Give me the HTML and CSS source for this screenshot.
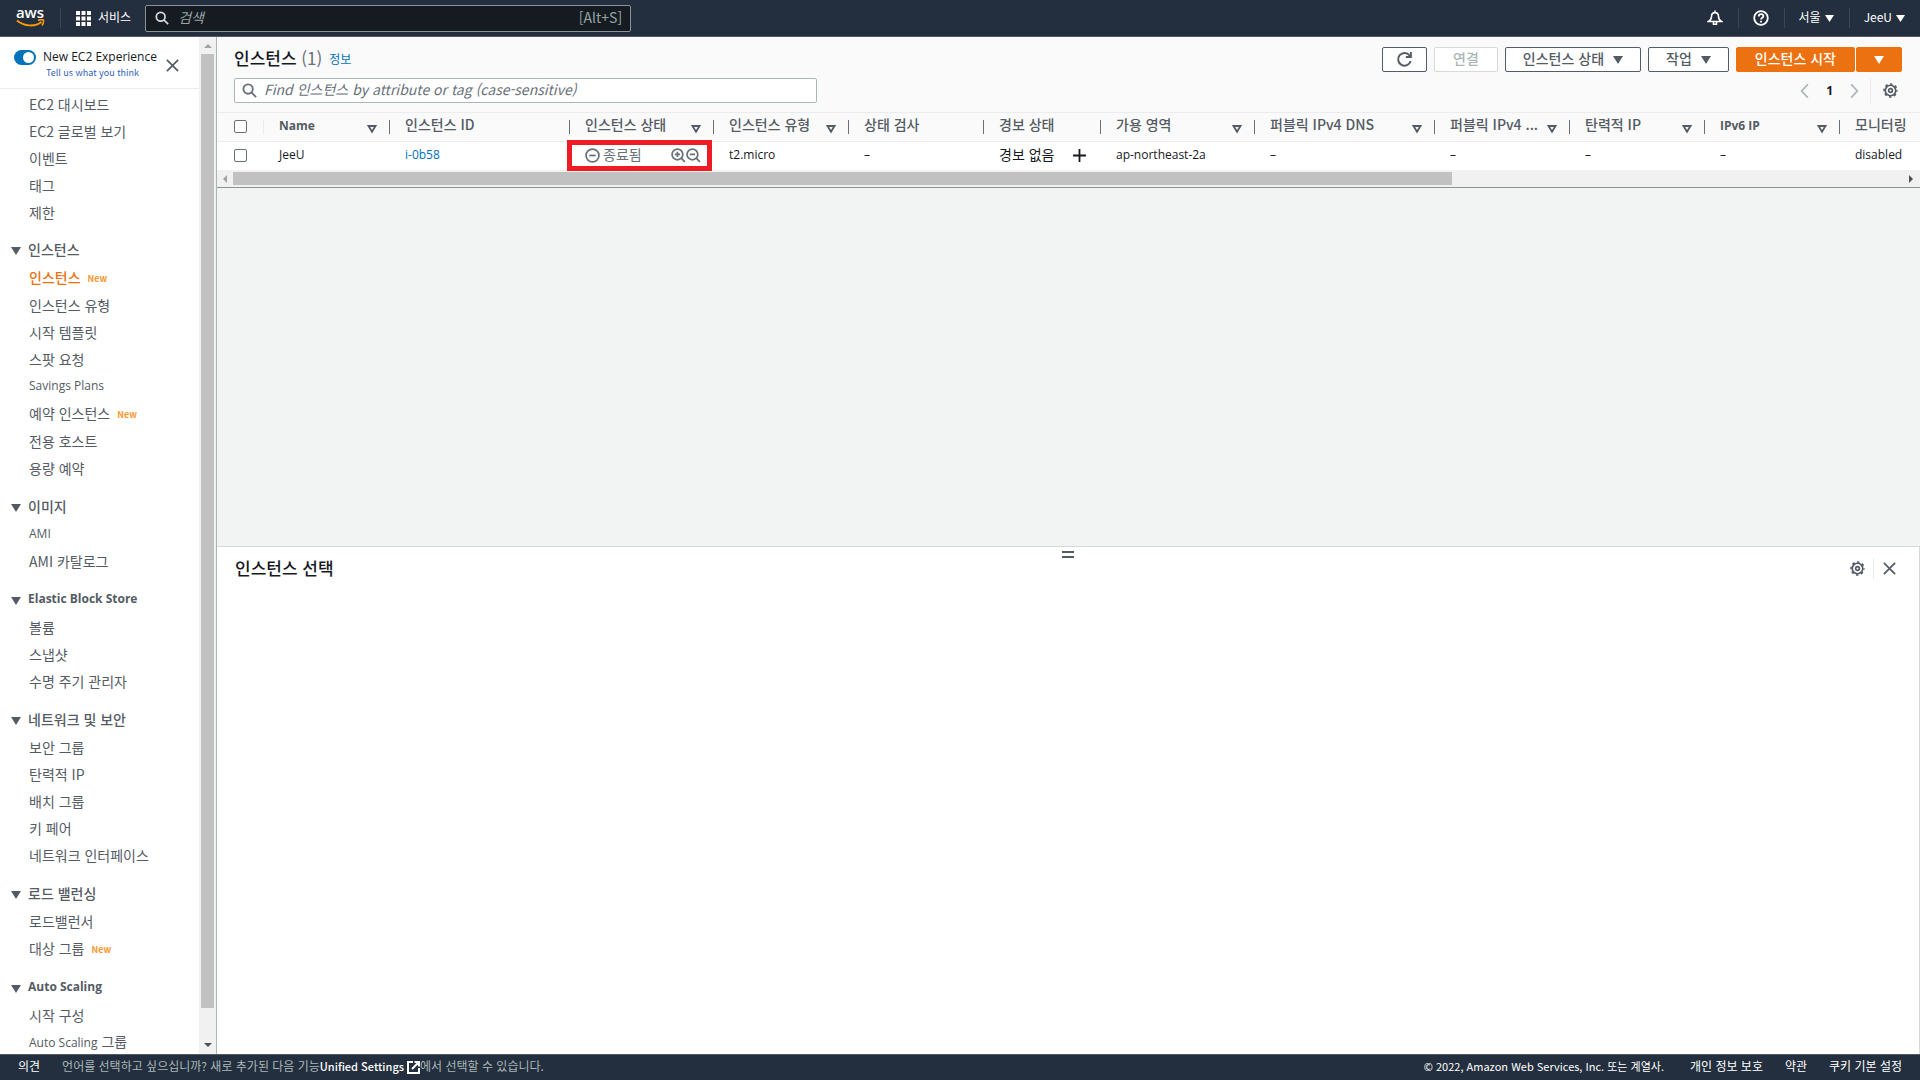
FILE: index.html
```html
<!DOCTYPE html>
<html lang="ko">
<head>
    <meta charset="UTF-8">
    <meta name="viewport" content="width=device-width, initial-scale=1.0">
    <title>인스턴스 | EC2 Management Console</title>
    <link rel="stylesheet" href="styles.css">
</head>
<body>
    <!-- shared icons -->
    <svg class="sprite" aria-hidden="true">
        <symbol id="icon-search" viewBox="0 0 16 16">
            <circle cx="6.5" cy="6.5" r="5" fill="none" stroke="currentColor" stroke-width="2"/>
            <path d="M10 10l5 5" fill="none" stroke="currentColor" stroke-width="2"/>
        </symbol>
        <symbol id="icon-gear" viewBox="0 0 16 16">
            <circle cx="8" cy="8" r="5.6" fill="none" stroke="currentColor" stroke-width="1.8"/>
            <circle cx="8" cy="8" r="6.9" fill="none" stroke="currentColor" stroke-width="1.6" stroke-dasharray="2.71 2.71" stroke-dashoffset="1.35"/>
            <circle cx="8" cy="8" r="2" fill="none" stroke="currentColor" stroke-width="1.8"/>
        </symbol>
        <symbol id="icon-close" viewBox="0 0 16 16">
            <path d="M2 2l12 12M14 2L2 14" fill="none" stroke="currentColor" stroke-width="1.8"/>
        </symbol>
        <symbol id="icon-caret" viewBox="0 0 10 10">
            <path d="M0 1h10L5 9z" fill="currentColor"/>
        </symbol>
        <symbol id="icon-sort" viewBox="0 0 10 10">
            <path d="M1.5 2h7L5 7.8z" fill="none" stroke="currentColor" stroke-width="1.8"/>
        </symbol>
    </svg>

    <header class="topbar">
        <a href="#" class="logo" aria-label="AWS">
            <span>aws</span>
            <svg width="29" height="9" viewBox="0 0 29 9">
                <path d="M1 1.5c7 6 18 6.5 24.5 1.5" fill="none" stroke="#ff9900" stroke-width="2"/>
                <path d="M22 1.5c2-1 4-1 5.5-.5.3 2-.3 4-1.5 5.5" fill="none" stroke="#ff9900" stroke-width="1.5"/>
            </svg>
        </a>
        <button class="services">
            <svg width="15" height="15" viewBox="0 0 15 15" fill="#fff">
                <path d="M0 0h4v4H0zM5.5 0h4v4h-4zM11 0h4v4h-4zM0 5.5h4v4H0zM5.5 5.5h4v4h-4zM11 5.5h4v4h-4zM0 11h4v4H0zM5.5 11h4v4h-4zM11 11h4v4h-4z"/>
            </svg>
            <span>서비스</span>
        </button>
        <label class="top-search">
            <svg width="14" height="14"><use href="#icon-search"/></svg>
            <input type="search" placeholder="검색" aria-label="검색">
            <span>[Alt+S]</span>
        </label>
        <nav class="top-links">
            <button aria-label="알림">
                <svg width="16" height="16" viewBox="0 0 16 16" fill="none" stroke="#fff" stroke-width="1.6">
                    <path d="M8 .5v2M1.5 11.5c2.5-1.5 3-3 3-5C4.5 4 6 2.6 8 2.6s3.5 1.4 3.5 3.9c0 2 .5 3.5 3 5z"/>
                    <path d="M6.5 12v2.2h3V12"/>
                </svg>
            </button>
            <button aria-label="도움말">
                <svg width="16" height="16" viewBox="0 0 16 16" fill="none" stroke="#fff" stroke-width="1.8">
                    <circle cx="8" cy="8" r="6.8"/>
                    <path d="M5.8 6.4c0-3 4.6-2.8 4.6-.2C10.4 7.8 8 7.6 8 9.6M8 10.8v1.7"/>
                </svg>
            </button>
            <button><span>서울</span> <svg width="9" height="9"><use href="#icon-caret"/></svg></button>
            <button><span>JeeU</span> <svg width="9" height="9"><use href="#icon-caret"/></svg></button>
        </nav>
    </header>

    <div class="layout">
        <aside class="sidebar">
            <div class="side-content">
                <div class="experience">
                    <input type="checkbox" id="new-exp" class="toggle" checked>
                    <div class="exp-text">
                        <label for="new-exp">New EC2 Experience</label>
                        <a href="#">Tell us what you think</a>
                    </div>
                    <button class="icon-btn" aria-label="닫기"><svg width="15" height="15"><use href="#icon-close"/></svg></button>
                </div>
                <nav class="side-nav">
                    <ul>
                        <li><a href="#">EC2 대시보드</a></li>
                        <li><a href="#">EC2 글로벌 보기</a></li>
                        <li><a href="#">이벤트</a></li>
                        <li><a href="#">태그</a></li>
                        <li><a href="#">제한</a></li>
                    </ul>
                    <h3><svg width="10" height="10"><use href="#icon-caret"/></svg><span>인스턴스</span></h3>
                    <ul>
                        <li class="has-badge"><a href="#" class="active">인스턴스</a><span class="badge">New</span></li>
                        <li><a href="#">인스턴스 유형</a></li>
                        <li><a href="#">시작 템플릿</a></li>
                        <li><a href="#">스팟 요청</a></li>
                        <li><a href="#" class="latin">Savings Plans</a></li>
                        <li class="has-badge"><a href="#">예약 인스턴스</a><span class="badge">New</span></li>
                        <li><a href="#">전용 호스트</a></li>
                        <li><a href="#">용량 예약</a></li>
                    </ul>
                    <h3><svg width="10" height="10"><use href="#icon-caret"/></svg><span>이미지</span></h3>
                    <ul>
                        <li><a href="#" class="latin">AMI</a></li>
                        <li><a href="#">AMI 카탈로그</a></li>
                    </ul>
                    <h3><svg width="10" height="10"><use href="#icon-caret"/></svg><span class="latin">Elastic Block Store</span></h3>
                    <ul>
                        <li><a href="#">볼륨</a></li>
                        <li><a href="#">스냅샷</a></li>
                        <li><a href="#">수명 주기 관리자</a></li>
                    </ul>
                    <h3><svg width="10" height="10"><use href="#icon-caret"/></svg><span>네트워크 및 보안</span></h3>
                    <ul>
                        <li><a href="#">보안 그룹</a></li>
                        <li><a href="#">탄력적 IP</a></li>
                        <li><a href="#">배치 그룹</a></li>
                        <li><a href="#">키 페어</a></li>
                        <li><a href="#">네트워크 인터페이스</a></li>
                    </ul>
                    <h3><svg width="10" height="10"><use href="#icon-caret"/></svg><span>로드 밸런싱</span></h3>
                    <ul>
                        <li><a href="#">로드밸런서</a></li>
                        <li class="has-badge"><a href="#">대상 그룹</a><span class="badge">New</span></li>
                    </ul>
                    <h3><svg width="10" height="10"><use href="#icon-caret"/></svg><span class="latin">Auto Scaling</span></h3>
                    <ul>
                        <li><a href="#">시작 구성</a></li>
                        <li><a href="#"><span class="latin">Auto Scaling</span> 그룹</a></li>
                    </ul>
                </nav>
            </div>
            <div class="scroll-y">
                <svg width="8" height="4" viewBox="0 0 8 4"><path d="M0 4h8L4 0z" fill="#a3a3a3"/></svg>
                <div class="track"><div class="thumb"></div></div>
                <svg width="8" height="4" viewBox="0 0 8 4"><path d="M0 0h8L4 4z" fill="#505050"/></svg>
            </div>
        </aside>

        <main>
            <section class="instances">
                <div class="panel-head">
                    <div class="head-row">
                        <h1>인스턴스 <span>(1)</span></h1>
                        <a href="#" class="info">정보</a>
                        <div class="actions">
                            <button class="btn refresh" aria-label="새로 고침">
                                <svg width="17" height="17" viewBox="0 0 16 16" fill="none" stroke="currentColor" stroke-width="1.8">
                                    <path d="M13.8 9.5A6 6 0 1 1 12.8 4.2L14 5.5"/>
                                    <path d="M14 1v4.7H9.3"/>
                                </svg>
                            </button>
                            <button class="btn connect" disabled><span>연결</span></button>
                            <button class="btn"><span>인스턴스 상태</span> <svg width="10" height="10"><use href="#icon-caret"/></svg></button>
                            <button class="btn"><span>작업</span> <svg width="10" height="10"><use href="#icon-caret"/></svg></button>
                            <div class="split-btn">
                                <button class="btn primary"><span>인스턴스 시작</span></button>
                                <button class="btn primary more" aria-label="더 보기"><svg width="10" height="10"><use href="#icon-caret"/></svg></button>
                            </div>
                        </div>
                    </div>
                    <div class="head-row filter-row">
                        <label class="filter">
                            <svg width="15" height="15"><use href="#icon-search"/></svg>
                            <input type="search" placeholder="Find 인스턴스 by attribute or tag (case-sensitive)" aria-label="Find">
                        </label>
                        <div class="pager">
                            <button aria-label="이전"><svg width="9" height="16" viewBox="0 0 8 14"><path d="M7 1L1.5 7 7 13" fill="none" stroke="currentColor" stroke-width="1.6"/></svg></button>
                            <span class="latin">1</span>
                            <button aria-label="다음"><svg width="9" height="16" viewBox="0 0 8 14"><path d="M1 1l5.5 6L1 13" fill="none" stroke="currentColor" stroke-width="1.6"/></svg></button>
                            <button class="settings" aria-label="기본 설정"><svg width="15" height="15"><use href="#icon-gear"/></svg></button>
                        </div>
                    </div>
                </div>

                <table>
                    <colgroup>
                        <col class="c-check"><col class="c-name"><col class="c-wide"><col class="c-state"><col class="c-mid"><col class="c-mid">
                        <col class="c-alarm"><col class="c-zone"><col class="c-wide"><col class="c-mid"><col class="c-mid"><col class="c-mid"><col>
                    </colgroup>
                    <thead>
                        <tr>
                            <th><div class="light"><input type="checkbox" aria-label="모두 선택"></div></th>
                            <th><div class="latin">Name <svg width="10" height="10"><use href="#icon-sort"/></svg></div></th>
                            <th><div>인스턴스 ID</div></th>
                            <th><div>인스턴스 상태 <svg width="10" height="10"><use href="#icon-sort"/></svg></div></th>
                            <th><div>인스턴스 유형 <svg width="10" height="10"><use href="#icon-sort"/></svg></div></th>
                            <th><div>상태 검사</div></th>
                            <th><div>경보 상태</div></th>
                            <th><div>가용 영역 <svg width="10" height="10"><use href="#icon-sort"/></svg></div></th>
                            <th><div>퍼블릭 IPv4 DNS <svg width="10" height="10"><use href="#icon-sort"/></svg></div></th>
                            <th><div>퍼블릭 IPv4 ... <svg width="10" height="10"><use href="#icon-sort"/></svg></div></th>
                            <th><div>탄력적 IP <svg width="10" height="10"><use href="#icon-sort"/></svg></div></th>
                            <th><div class="latin">IPv6 IP <svg width="10" height="10"><use href="#icon-sort"/></svg></div></th>
                            <th><div>모니터링</div></th>
                        </tr>
                    </thead>
                    <tbody>
                        <tr>
                            <td><input type="checkbox" aria-label="JeeU 선택"></td>
                            <td>JeeU</td>
                            <td><a href="#">i-0b58</a></td>
                            <td class="marked">
                                <div class="state">
                                    <svg width="15" height="15" viewBox="0 0 14 14" fill="none" stroke="currentColor" stroke-width="1.6"><circle cx="7" cy="7" r="6"/><path d="M4 7h6"/></svg>
                                    <span>종료됨</span>
                                    <svg class="zoom-in" width="15" height="15" viewBox="0 0 14 14" fill="none" stroke="currentColor" stroke-width="1.6"><circle cx="6" cy="6" r="5"/><path d="M9.5 9.5L13 13M3.5 6h5M6 3.5v5"/></svg>
                                    <svg width="15" height="15" viewBox="0 0 14 14" fill="none" stroke="currentColor" stroke-width="1.6"><circle cx="6" cy="6" r="5"/><path d="M9.5 9.5L13 13M3.5 6h5"/></svg>
                                </div>
                            </td>
                            <td>t2.micro</td>
                            <td>–</td>
                            <td>
                                <div class="alarm"><span>경보 없음</span> <svg width="13" height="13" viewBox="0 0 13 13"><path d="M6.5 0v13M0 6.5h13" stroke="#16191f" stroke-width="1.8"/></svg></div>
                            </td>
                            <td>ap-northeast-2a</td>
                            <td>–</td>
                            <td>–</td>
                            <td>–</td>
                            <td>–</td>
                            <td>disabled</td>
                        </tr>
                    </tbody>
                </table>
                <div class="scroll-x">
                    <svg width="4" height="8" viewBox="0 0 4 8"><path d="M4 0v8L0 4z" fill="#a3a3a3"/></svg>
                    <div class="track"><div class="thumb"></div></div>
                    <svg width="4" height="8" viewBox="0 0 4 8"><path d="M0 0v8l4-4z" fill="#505050"/></svg>
                </div>
            </section>

            <section class="details">
                <div class="handle"></div>
                <div class="details-head">
                    <h2>인스턴스 선택</h2>
                    <button class="icon-btn" aria-label="설정"><svg width="15" height="15"><use href="#icon-gear"/></svg></button>
                    <button class="icon-btn divided" aria-label="닫기"><svg width="15" height="15"><use href="#icon-close"/></svg></button>
                </div>
            </section>
        </main>
    </div>

    <footer>
        <button>의견</button>
        <p>언어를 선택하고 싶으십니까? 새로 추가된 다음 기능<a href="#">Unified Settings <svg width="13" height="13" viewBox="0 0 13 13" fill="none" stroke="#fff" stroke-width="2"><path d="M6 1H1v11h11V7M7.5 1H12v4.5M12 1L5 8"/></svg></a>에서 선택할 수 있습니다.</p>
        <div class="legal">
            <strong>© 2022, Amazon Web Services, Inc. 또는 계열사.</strong>
            <a href="#">개인 정보 보호</a>
            <a href="#">약관</a>
            <a href="#">쿠키 기본 설정</a>
        </div>
    </footer>
</body>
</html>
```
FILE: styles.css
```css
:root {
    --navy: #232f3e;
    --text: #16191f;
    --text-secondary: #545b64;
    --border: #eaeded;
    --link: #0073bb;
    --orange: #ec7211;
    --korean: "Noto Sans CJK KR", "Noto Sans", sans-serif;
    --latin: "Open Sans", "Noto Sans CJK KR", sans-serif;
}

* {
    box-sizing: border-box;
}

body {
    margin: 0;
    height: 100vh;
    display: flex;
    flex-direction: column;
    overflow: hidden;
    font-family: var(--korean);
    font-size: 14px;
    line-height: 20px;
    color: var(--text);
    background: #f2f3f3;
}

button, input {
    font: inherit;
    color: inherit;
}

button {
    padding: 0;
    border: none;
    background: none;
    cursor: pointer;
}

a {
    color: var(--link);
    text-decoration: none;
}

svg {
    display: block;
    flex: none;
}

h1, h2, h3, p, ul {
    margin: 0;
    padding: 0;
    font-weight: 400;
}

.sprite {
    display: none;
}

.latin {
    font-family: var(--latin);
    font-size: 12px;
}

/* top bar */
.topbar {
    flex: none;
    display: flex;
    align-items: center;
    height: 37px;
    background: var(--navy);
    border-bottom: 1px solid #545b64;
    color: #fff;
    font-size: 12px;
}

.logo {
    display: flex;
    flex-direction: column;
    align-items: center;
    width: 60px;
    padding-bottom: 2px;
    color: #fff;
    font-family: var(--latin);
    font-size: 15px;
    font-weight: 600;
    line-height: 13px;
}

.services {
    display: flex;
    align-items: center;
    gap: 7px;
    height: 20px;
    padding: 0 14px 0 15px;
    border-left: 1px solid #3b4654;
}

.services span, .top-links span {
    padding-bottom: 2px;
}

.top-search {
    display: flex;
    align-items: center;
    width: 486px;
    height: 27px;
    padding: 0 8px 0 9px;
    background: #161b22;
    border: 1px solid #879596;
    border-radius: 2px;
    color: #95a5a6;
    font-size: 14px;
}

.top-search svg {
    color: #d5dbdb;
}

.top-search input, .filter input {
    flex: 1;
    min-width: 0;
    padding: 0 9px 3px;
    border: none;
    outline: none;
    background: none;
}

.top-search span {
    padding-bottom: 2px;
}

input::placeholder {
    color: inherit;
    opacity: 1;
    font-style: italic;
}

.top-links {
    display: flex;
    margin-left: auto;
}

.top-links button {
    display: flex;
    align-items: center;
    gap: 4px;
    height: 20px;
    padding: 0 15px 0 14px;
}

.top-links button + button {
    border-left: 1px solid #3b4654;
}

/* body */
.layout {
    flex: 1;
    min-height: 0;
    display: flex;
}

.sidebar {
    display: flex;
    width: 217px;
    background: #fff;
    border-right: 1px solid #aab7b8;
}

.side-content {
    flex: 1;
    overflow: hidden;
    color: var(--text-secondary);
}

.experience {
    display: flex;
    height: 52px;
    padding: 10px 19px 0 14px;
    border-bottom: 1px solid var(--border);
    color: var(--text);
    font-family: var(--latin);
    font-size: 12px;
}

.toggle {
    flex: none;
    appearance: none;
    width: 22px;
    height: 15px;
    margin: 3px 7px 0 0;
    padding: 2px;
    border-radius: 8px;
    background: var(--link);
}

.toggle::before {
    content: "";
    display: block;
    width: 11px;
    height: 11px;
    margin-left: auto;
    border-radius: 50%;
    background: #fff;
}

.exp-text {
    flex: 1;
    min-width: 0;
    white-space: nowrap;
}

.exp-text a {
    display: block;
    padding-left: 3px;
    font-family: var(--korean);
    font-size: 9px;
    line-height: 12px;
    color: #2e5fb7;
}

.icon-btn {
    color: var(--text-secondary);
}

.experience .icon-btn {
    height: 36px;
}

.side-nav {
    padding: 1px 0;
}

.side-nav ul {
    list-style: none;
    padding-left: 29px;
}

.side-nav li {
    display: flex;
    align-items: center;
    height: 27px;
    white-space: nowrap;
}

.side-nav .has-badge {
    height: 28px;
}

.side-nav a {
    color: inherit;
}

.side-nav .active {
    color: var(--orange);
    font-weight: 500;
}

.badge {
    padding: 3px 0 0 7px;
    color: #ff9933;
    font-size: 9px;
    font-weight: 700;
}

.side-nav h3 {
    display: flex;
    align-items: center;
    gap: 7px;
    height: 27px;
    margin: 10px 0 1px;
    padding-left: 11px;
    font-size: 14px;
    font-weight: 500;
}

.side-nav h3 + ul {
    padding-bottom: 1px;
}

.side-nav h3 .latin {
    font-weight: 700;
}

.side-nav h3 svg {
    margin-top: 5px;
}

.scroll-y, .scroll-x {
    display: flex;
    align-items: center;
    background: #f1f1f1;
}

.scroll-y {
    flex-direction: column;
    width: 17px;
    padding: 7px 0;
}

.scroll-y .track {
    flex: 1;
    width: 13px;
    margin: 6px 0;
}

.scroll-y .thumb {
    height: 97%;
    background: #c1c1c1;
}

main {
    flex: 1;
    min-width: 0;
    display: flex;
    flex-direction: column;
}

.instances {
    flex: 1;
}

.panel-head {
    height: 76px;
    padding: 10px 18px 0 17px;
    background: #fafafa;
    border-bottom: 1px solid var(--border);
}

.head-row {
    display: flex;
    align-items: center;
    height: 25px;
}

h1 {
    padding-bottom: 4px;
    font-size: 17px;
    font-weight: 500;
}

h1 span {
    color: #687078;
    font-weight: 400;
}

.info {
    margin-left: 7px;
    padding-bottom: 2px;
    font-size: 12px;
}

.actions {
    display: flex;
    gap: 7px;
    margin-left: auto;
}

.btn {
    display: flex;
    align-items: center;
    gap: 9px;
    height: 25px;
    padding: 0 17px;
    border: 1px solid var(--text-secondary);
    border-radius: 2px;
    background: #fff;
    color: var(--text-secondary);
    font-weight: 500;
}

.btn span {
    padding-bottom: 3px;
}

.refresh {
    padding: 0 13px;
}

.connect {
    padding: 0 18px;
}

.btn:disabled {
    border-color: #d5dbdb;
    color: #aab7b8;
}

.split-btn {
    display: flex;
    gap: 1px;
}

.primary {
    padding: 0 18px;
    border-color: var(--orange);
    background: var(--orange);
    color: #fff;
}

.more {
    padding: 0 17px;
}

.filter-row {
    margin-top: 6px;
}

.filter {
    display: flex;
    align-items: center;
    width: 583px;
    height: 25px;
    padding: 0 7px;
    background: #fff;
    border: 1px solid #aab7b8;
    border-radius: 2px;
    color: #687078;
}

.filter input {
    padding: 0 7px 3px;
}

.pager {
    display: flex;
    align-items: center;
    gap: 17px;
    margin-left: auto;
    font-weight: 700;
}

.pager button {
    color: #aab7b8;
}

.pager .settings {
    margin-left: -6px;
    padding: 5px 4px 5px 12px;
    border-left: 1px solid var(--border);
    color: var(--text-secondary);
}

/* instance table */
table {
    width: 100%;
    table-layout: fixed;
    border-collapse: collapse;
    background: #fff;
}

.c-check { width: 47px; }
.c-name { width: 126px; }
.c-wide { width: 180px; }
.c-state { width: 144px; }
.c-mid { width: 135px; }
.c-alarm { width: 117px; }
.c-zone { width: 154px; }

th, td {
    height: 29px;
    padding: 0 0 0 15px;
    text-align: left;
    font-weight: 400;
    white-space: nowrap;
}

td {
    padding-bottom: 1px;
    font-family: var(--latin);
    font-size: 12px;
}

th {
    height: 28px;
    background: #fafafa;
    border-bottom: 1px solid var(--border);
    color: var(--text-secondary);
}

th div {
    display: flex;
    align-items: flex-start;
    justify-content: space-between;
    height: 14px;
    padding-right: 12px;
    border-right: 1px solid #687078;
    font-weight: 500;
    line-height: 8px;
}

th .latin {
    font-weight: 700;
    line-height: 12px;
}

th .light {
    border-color: var(--border);
}

th svg {
    align-self: flex-end;
}

th:last-child div {
    border: none;
}

th input, td input {
    display: block;
    appearance: none;
    width: 13px;
    height: 13px;
    margin: 0 0 0 2px;
    border: 1px solid #687078;
    border-radius: 2px;
    background: #fff;
}

.marked {
    position: relative;
    color: #687078;
}

/* red highlight around the instance state */
.marked::after {
    content: "";
    position: absolute;
    inset: -2px 2px -1px -3px;
    border: 5px solid #ed1c24;
}

.state, .alarm {
    display: flex;
    align-items: center;
    padding-top: 1px;
    font-family: var(--korean);
    font-size: 14px;
}

.state span, .alarm span {
    padding-bottom: 4px;
}

.state {
    gap: 3px;
    padding-right: 13px;
}

.state .zoom-in {
    margin-left: auto;
}

.state svg + svg {
    margin-left: -3px;
}

.alarm {
    justify-content: space-between;
    padding-right: 15px;
}

.scroll-x {
    height: 18px;
    padding: 0 7px 0 6px;
    border-bottom: 1px solid #879596;
}

.scroll-x .track {
    flex: 1;
    height: 13px;
    margin: 0 6px;
}

.scroll-x .thumb {
    width: 73%;
    height: 100%;
    background: #c1c1c1;
}

/* bottom split panel */
.details {
    flex: 0 0 50%;
    background: #fff;
    border: 1px solid #d5dbdb;
    border-width: 1px 1px 0 0;
}

.handle {
    width: 12px;
    height: 7px;
    margin: 4px auto 0;
    border: 2px solid var(--text-secondary);
    border-width: 2px 0;
}

.details-head {
    display: flex;
    align-items: center;
    padding: 0 22px 0 18px;
}

h2 {
    flex: 1;
    padding-bottom: 2px;
    font-size: 17px;
    font-weight: 500;
}

.divided {
    margin-left: 8px;
    padding: 3px 0 3px 8px;
    border-left: 1px solid var(--border);
}

/* footer */
footer {
    flex: none;
    display: flex;
    align-items: center;
    height: 26px;
    padding: 0 18px 4px;
    background: var(--navy);
    border-top: 1px solid #545b64;
    color: #fff;
    font-size: 12px;
}

footer p {
    display: flex;
    align-items: center;
    margin-left: 22px;
    color: #aab7b8;
}

footer a {
    display: flex;
    align-items: center;
    gap: 3px;
    color: #fff;
}

footer p a {
    font-size: 11px;
    font-weight: 500;
}

footer svg {
    margin-top: 3px;
}

.legal {
    display: flex;
    gap: 22px;
    margin-left: auto;
}

.legal strong {
    margin-right: 4px;
    font-size: 11px;
    font-weight: 400;
}
```
